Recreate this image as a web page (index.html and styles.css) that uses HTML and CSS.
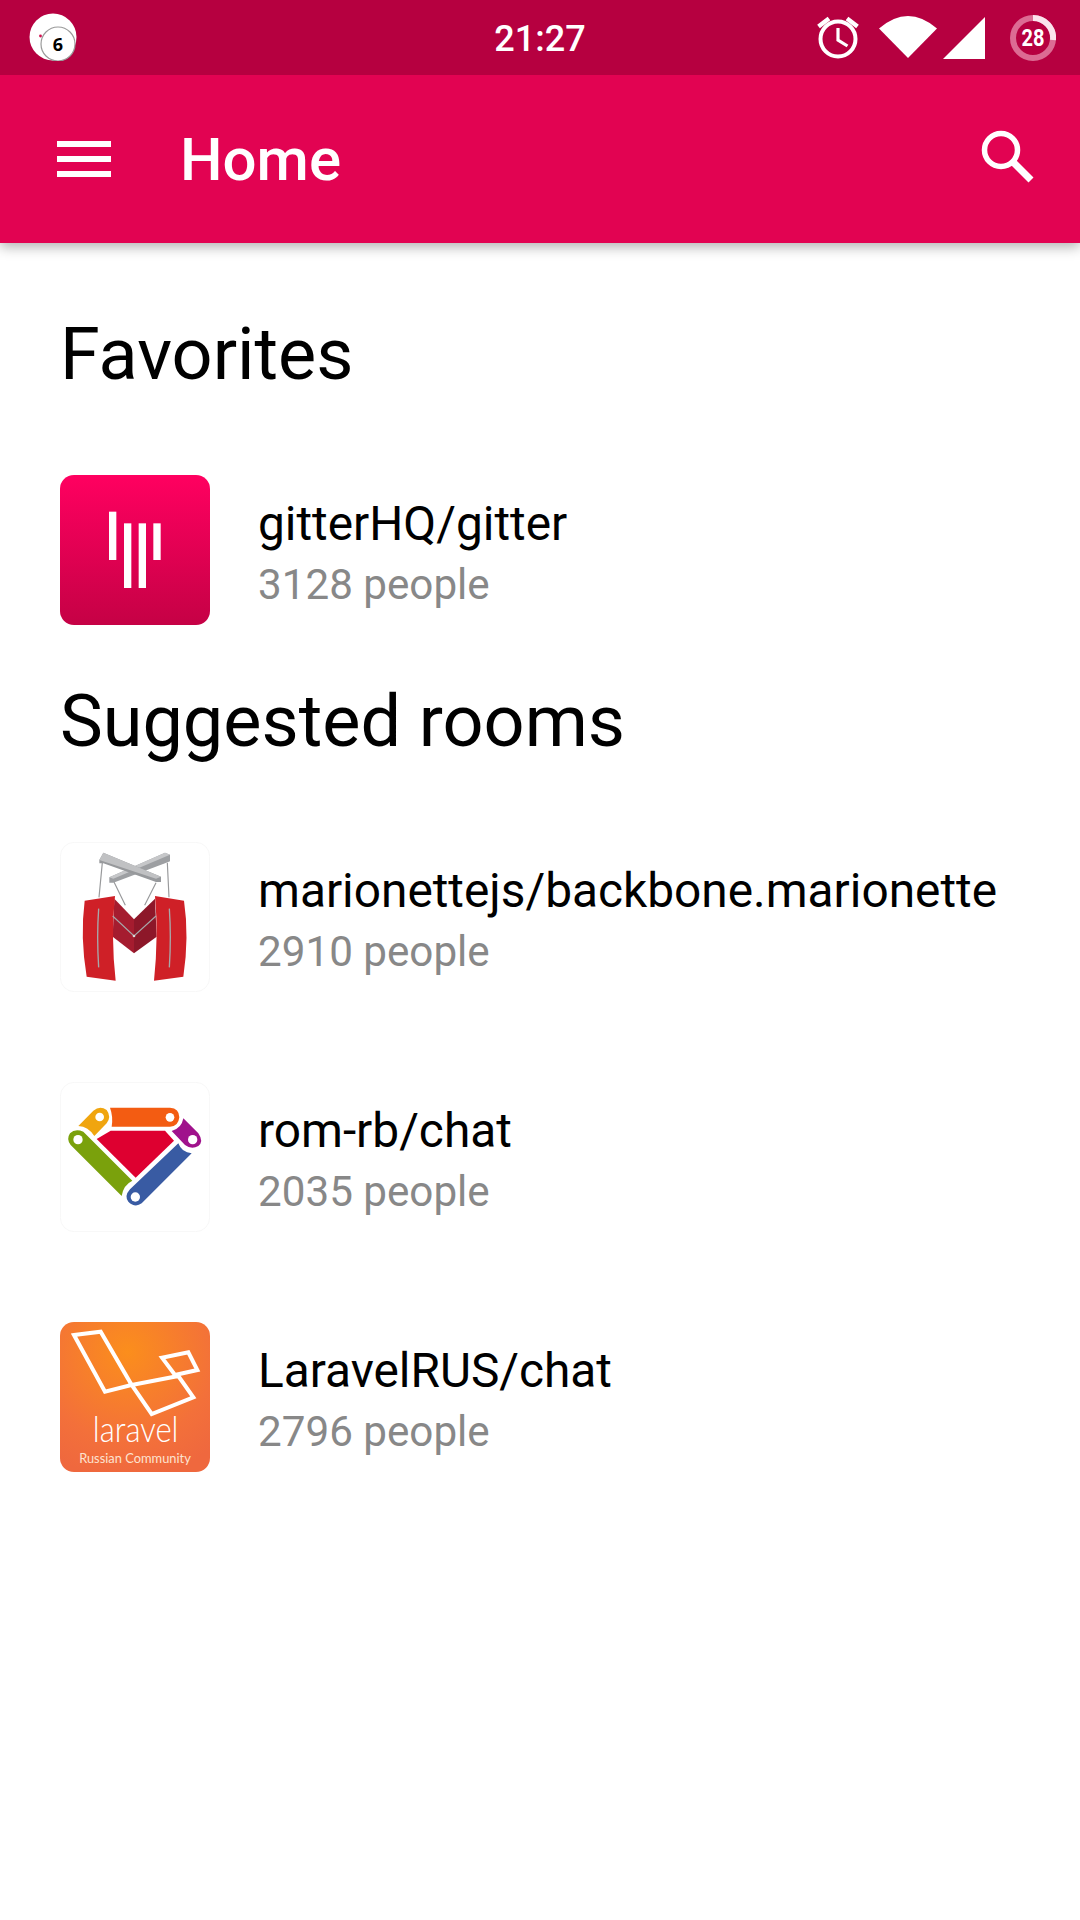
FILE: index.html
```html
<!DOCTYPE html>
<html lang="en">
<head>
<meta charset="utf-8">
<title>Home</title>
<link rel="stylesheet" href="styles.css">
</head>
<body>
<div class="screen">
  <header class="top">
    <div class="status">
      <div class="status-left">
        <svg class="notif" viewBox="0 0 48 48" width="48" height="48">
          <circle cx="24" cy="24" r="23.5" fill="#fff"/>
          <circle cx="29" cy="31" r="17" fill="#fff" stroke="#9a9a9a" stroke-width="1.2"/>
          <circle cx="11.5" cy="23" r="1.4" fill="#d0104f"/>
          <text class="notif-num" x="29" y="38" text-anchor="middle">6</text>
        </svg>
      </div>
      <div class="clock">21:27</div>
      <div class="status-right">
        <svg class="ic-alarm" viewBox="0 0 44 44" width="44" height="44">
          <circle cx="22" cy="24" r="17.5" fill="none" stroke="#fff" stroke-width="4"/>
          <path d="M22 13v12l9.5 6" fill="none" stroke="#fff" stroke-width="3.2"/>
          <path d="M2.500 11.500 13 3.500M41.500 11.500 31 3.500" stroke="#fff" stroke-width="4.400" fill="none"/>
        </svg>
        <svg class="ic-wifi" viewBox="0 0 58 42" width="58" height="42">
          <path d="M0 12.500Q29 -12.500 58 12.500L29 42Z" fill="#fff"/>
        </svg>
        <svg class="ic-signal" viewBox="0 0 42 42" width="42" height="42">
          <path d="M42 0V42H0Z" fill="#fff"/>
        </svg>
        <svg class="ic-batt" viewBox="0 0 46 46" width="46" height="46">
          <circle cx="23" cy="23" r="20" fill="none" stroke="#dc6b93" stroke-width="6"/>
          <path d="M23 3A20 20 0 0 1 43 25" fill="none" stroke="#fbe3ec" stroke-width="6"/>
          <text class="batt-num" x="23" y="31" text-anchor="middle" textLength="23" lengthAdjust="spacingAndGlyphs">28</text>
        </svg>
      </div>
    </div>
    <div class="appbar">
      <div class="menu"><span></span><span></span><span></span></div>
      <h1 class="title">Home</h1>
      <svg class="search" viewBox="0 0 54 54" width="54" height="54">
        <circle cx="20" cy="20" r="16.500" fill="none" stroke="#fff" stroke-width="5.500"/>
        <path d="M32 32 50 50" stroke="#fff" stroke-width="7" fill="none"/>
      </svg>
    </div>
  </header>

  <main class="content">
    <section class="group group-fav">
      <h2 class="heading">Favorites</h2>
      <div class="room">
        <svg class="avatar" viewBox="30 30 450 450" width="150" height="150">
          <defs>
            <linearGradient id="gitterBg" x1="0" y1="0" x2="0" y2="1">
              <stop offset="0" stop-color="#ff0060"/>
              <stop offset="1" stop-color="#c50145"/>
            </linearGradient>
          </defs>
          <rect x="30" y="30" width="450" height="450" rx="42" fill="url(#gitterBg)"/>
          <rect x="177" y="140" width="22" height="145" fill="#fff"/>
          <rect x="222" y="175" width="22" height="194" fill="#fff"/>
          <rect x="266" y="175" width="22" height="194" fill="#fff"/>
          <rect x="310" y="175" width="22" height="110" fill="#fff"/>
        </svg>
        <div class="room-text">
          <div class="room-name">gitterHQ/gitter</div>
          <div class="room-count">3128 people</div>
        </div>
      </div>
    </section>

    <section class="group">
      <h2 class="heading">Suggested rooms</h2>
      <div class="room">
        <svg class="avatar" viewBox="30 36 450 450" width="150" height="150">
          <rect x="31" y="37" width="448" height="448" rx="42" fill="#fff" stroke="#f3f3f3" stroke-width="2"/>
          <path d="M157 98 147 202M352 98 357 202M192 156 226 226M318 158 284 226" stroke="#98999b" stroke-width="3.500" fill="none"/>
          <path d="M178 142 345 68 360 74V94L345 100 190 158H178Z" fill="#9d9fa2"/>
          <path d="M178 142 345 68 360 74 190 146Z" fill="#c6c7c9"/>
          <path d="M148 90 160 68 333 140V156H318L160 100H148Z" fill="#97999c"/>
          <path d="M148 90 160 68 333 140 318 146Z" fill="#c0c1c3"/>
          <path d="M193 206 252 268 252 370 188 320Z" fill="#a51c2f"/>
          <path d="M315 206 252 268 252 370 320 320Z" fill="#8d1729"/>
          <path d="M104 212 195 198Q182 320 197 452L110 440Q90 320 104 212Z" fill="#cf2027"/>
          <path d="M315 198 402 212Q418 320 400 440L312 452Q326 320 315 198Z" fill="#cf2027"/>
          <path d="M188 258 252 318 318 258" stroke="#a7a8aa" stroke-width="3.500" fill="none"/>
          <circle cx="252" cy="318" r="4" fill="#d8d8d8"/>
          <path d="M146 236Q140 320 146 412M358 236Q364 320 358 412" stroke="#a7a8aa" stroke-width="4" fill="none"/>
        </svg>
        <div class="room-text">
          <div class="room-name">marionettejs/backbone.marionette</div>
          <div class="room-count">2910 people</div>
        </div>
      </div>
      <div class="room">
        <svg class="avatar" viewBox="30 36 450 450" width="150" height="150">
          <rect x="31" y="37" width="448" height="448" rx="42" fill="#fff" stroke="#f3f3f3" stroke-width="2"/>
          <path d="M85 168 130 122Q150 105 170 120 185 140 170 160L133 198Q115 170 85 168Z" fill="#f0a50f"/>
          <path d="M180 113H360Q388 115 388 142 385 170 360 170H185Q190 140 180 113Z" fill="#f35c12"/>
          <path d="M400 145 445 190Q462 215 445 228 425 240 405 225L365 183Q395 175 400 145Z" fill="#a0128c"/>
          <path d="M60 190Q75 175 100 185L247 332Q220 345 215 378L62 225Q48 208 60 190Z" fill="#7aa10c"/>
          <path d="M385 220Q395 248 425 250L275 400Q255 415 235 395 222 378 240 358Z" fill="#395ba3"/>
          <path d="M182 182H345L372 212 257 323 140 207Z" fill="#de0030"/>
          <circle cx="149" cy="141" r="13" fill="#fff"/>
          <circle cx="360" cy="142" r="13" fill="#fff"/>
          <circle cx="428" cy="209" r="14" fill="#fff"/>
          <circle cx="84" cy="209" r="14" fill="#fff"/>
          <circle cx="256" cy="381" r="14" fill="#fff"/>
        </svg>
        <div class="room-text">
          <div class="room-name">rom-rb/chat</div>
          <div class="room-count">2035 people</div>
        </div>
      </div>
      <div class="room">
        <svg class="avatar" viewBox="30 36 450 450" width="150" height="150">
          <defs>
            <radialGradient id="larBg" cx="0.45" cy="0.2" r="0.85">
              <stop offset="0" stop-color="#fb8e1c"/>
              <stop offset="0.7" stop-color="#f3703a"/>
              <stop offset="1" stop-color="#ef683e"/>
            </radialGradient>
          </defs>
          <rect x="30" y="36" width="450" height="450" rx="42" fill="url(#larBg)"/>
          <g fill="none" stroke="#fff" stroke-width="12" stroke-linejoin="miter">
            <path d="M72 75 152 65 245 225 165 245Z"/>
            <path d="M245 225 385 198 430 262 305 312Z"/>
            <path d="M336 143 415 127 442 180 375 195Z"/>
          </g>
          <text class="lar-main" x="257" y="395" text-anchor="middle" textLength="257" lengthAdjust="spacingAndGlyphs">laravel</text>
          <text class="lar-sub" x="255" y="458" text-anchor="middle" textLength="335" lengthAdjust="spacingAndGlyphs">Russian Community</text>
        </svg>
        <div class="room-text">
          <div class="room-name">LaravelRUS/chat</div>
          <div class="room-count">2796 people</div>
        </div>
      </div>
    </section>
  </main>
</div>
</body>
</html>
```
FILE: styles.css
```css
* { box-sizing: border-box; }
html, body { margin: 0; padding: 0; background: #fff; }
body { font-family: Roboto, "Noto Sans", sans-serif; }
.screen { width: 1080px; height: 1920px; overflow: hidden; display: flex; flex-direction: column; }

.top { box-shadow: 0 4px 12px rgba(0, 0, 0, 0.3); }
.status { height: 75px; background: #b60040; display: grid; grid-template-columns: 1fr auto 1fr; align-items: center; }
.status-left { padding-left: 29px; display: flex; }
.clock { color: #fff; font-size: 36px; font-weight: 500; padding-top: 2px; }
.status-right { display: flex; align-items: center; justify-content: flex-end; padding-right: 24px; }
.status-right svg { display: block; }
.ic-alarm { margin-right: 19px; margin-top: -1px; }
.ic-wifi { margin-right: 6px; margin-top: -1px; }
.ic-signal { margin-right: 25px; margin-top: 0; }
.notif { display: block; margin-top: -1px; }
.notif-num { font-family: "Noto Sans", sans-serif; font-weight: 700; font-size: 18px; fill: #000; }
.batt-num { font-family: Roboto, sans-serif; font-weight: 700; font-size: 24px; fill: #fff; }

.appbar { height: 168px; background: #e20352; display: flex; align-items: center; padding: 0 45px 0 57px; }
.menu { width: 54px; display: flex; flex-direction: column; gap: 9px; }
.menu span { display: block; height: 6px; background: #fff; }
.title { margin: 2px 0 0 69px; flex: 1; color: #fff; font-size: 60px; font-weight: 500; line-height: 1; }
.search { display: block; margin-top: -4px; }

.content { padding: 0 0 0 60px; }
.group-fav { height: 417px; padding-top: 71px; }
.heading { margin: 0; font-size: 72px; font-weight: 400; color: #000; line-height: 82px; }
.group-fav .heading { margin-bottom: 79px; }
.group .room + .room { margin-top: 90px; }
.room { display: flex; align-items: center; gap: 48px; height: 150px; }
.group:not(.group-fav) .heading { margin-bottom: 79px; margin-top: 21px; }
.avatar { display: block; flex: none; }
.room-text { padding-top: 7px; }
.room-name { font-size: 47.8px; line-height: 62px; color: #000; }
.room-count { font-size: 42.2px; line-height: 60px; color: #888; }

.lar-main { font-family: Lato, sans-serif; font-weight: 300; font-size: 104px; fill: #fff; }
.lar-sub { font-family: Lato, sans-serif; font-weight: 400; font-size: 42px; fill: #fde3d0; }
```
